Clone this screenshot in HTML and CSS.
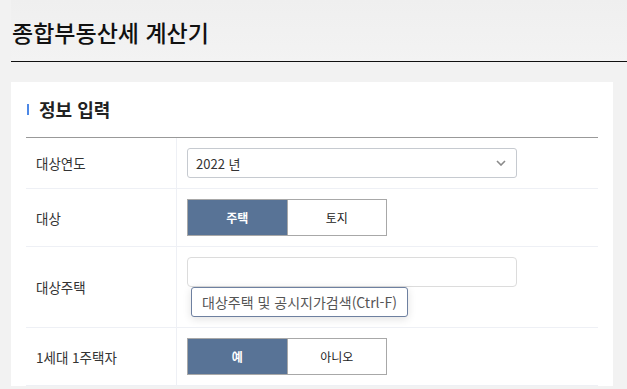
FILE: index.html
```html
<!DOCTYPE html>
<html lang="ko">
<head>
<meta charset="utf-8">
<title>종합부동산세 계산기</title>
<link rel="stylesheet" href="styles.css">
</head>
<body>

<div class="page_head">
  <h1 class="page_title">종합부동산세 계산기</h1>
</div>

<div class="card">
  <h2 class="sec_title"><span class="sec_bar"></span>정보 입력</h2>

  <div class="form_table">
    <div class="row">
      <div class="label">대상연도</div>
      <div class="value">
        <div class="select_box">
          <span>2022 년</span>
          <svg class="chev" width="10" height="6" viewBox="0 0 10 6"><path d="M1 1 L5 5 L9 1" fill="none" stroke="#8a8a8a" stroke-width="1.6"/></svg>
        </div>
      </div>
    </div>

    <div class="row">
      <div class="label">대상</div>
      <div class="value">
        <div class="toggle">
          <span class="opt on">주택</span>
          <span class="opt">토지</span>
        </div>
      </div>
    </div>

    <div class="row">
      <div class="label">대상주택</div>
      <div class="value">
        <div class="text_box"></div>
        <button class="search_btn" type="button">대상주택 및 공시지가검색(Ctrl-F)</button>
      </div>
    </div>

    <div class="row">
      <div class="label">1세대 1주택자</div>
      <div class="value">
        <div class="toggle">
          <span class="opt on">예</span>
          <span class="opt">아니오</span>
        </div>
      </div>
    </div>
  </div>
</div>

</body>
</html>
```

FILE: styles.css
```css
body
{
margin: 0px;
background: #f2f2f2;
font-family: "Noto Sans CJK KR", "Noto Sans", sans-serif;
color: #222;
}

.page_head
{
margin-left: 11px;
height: 61px;
border-bottom: 1px solid #111;
background: linear-gradient(#efefef, #f3f3f3);
}

.page_title
{
margin: 0px;
padding-left: 1px;
padding-top: 15px;
font-size: 23px;
line-height: 34px;
font-weight: 500;
color: #111;
}

.card
{
margin-top: 20px;
margin-left: 11px;
width: 572px;
padding: 15px 15px 0px 15px;
background: #fff;
}

.sec_title
{
display: flex;
align-items: center;
margin: 0px;
height: 24px;
padding-bottom: 16px;
border-bottom: 1px solid #999;
font-size: 18px;
font-weight: 700;
color: #222;
}

.sec_bar
{
display: inline-block;
width: 2px;
height: 11px;
background: #4d88e6;
margin-left: 1px;
margin-right: 10px;
}

.row
{
display: flex;
border-bottom: 1px solid #eef0f5;
}

.label
{
width: 140px;
padding-left: 10px;
border-right: 1px solid #eef0f5;
display: flex;
align-items: center;
font-size: 13.5px;
color: #333;
}

.value
{
padding: 10px 10px 10px 10px;
}

.select_box
{
width: 312px;
height: 28px;
border: 1px solid #c6cad0;
border-radius: 3px;
padding: 0px 8px;
display: flex;
align-items: center;
justify-content: space-between;
font-size: 13px;
color: #333;
}

.chev
{
margin-right: 2px;
}

.toggle
{
display: flex;
width: 198px;
height: 35px;
border: 1px solid #a8a8a8;
}

.opt
{
flex: 1;
display: flex;
align-items: center;
justify-content: center;
font-size: 12px;
color: #222;
}

.opt.on
{
background: #587396;
color: #fff;
font-weight: 700;
border-right: 1px solid #a8a8a8;
}

.text_box
{
width: 328px;
height: 28px;
border: 1px solid #dcdcdc;
border-radius: 4px;
}

.search_btn
{
display: block;
margin-left: 4px;
width: 217px;
height: 30px;
border: 1px solid #6e80a0;
border-radius: 3px;
background: #fff;
box-shadow: 0px 2px 8px rgba(0, 0, 0, 0.12);
font-family: "Noto Sans CJK KR", sans-serif;
font-size: 14px;
color: #555;
padding: 0px;
}
```
